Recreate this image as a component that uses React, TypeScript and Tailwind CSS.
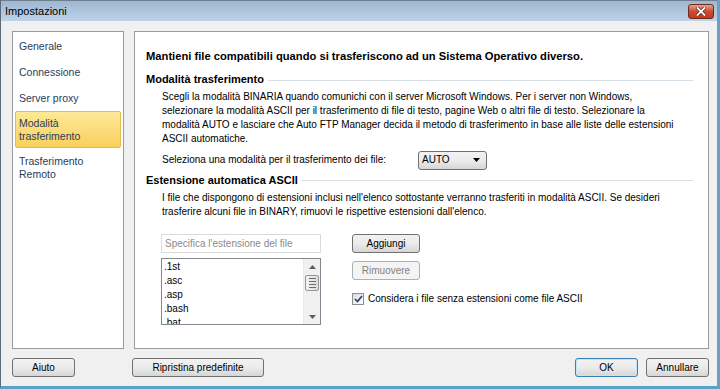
import React from "react";

const font = { fontFamily: '"Liberation Sans", Arial, sans-serif' };

function Btn({ children, className = "", disabled = false, focus = false }: { children: React.ReactNode; className?: string; disabled?: boolean; focus?: boolean }) {
  const base = disabled
    ? "border-[#adb2b5] bg-[#f4f4f4] text-[#838383]"
    : focus
    ? "border-[#3c7fb1] bg-gradient-to-b from-[#f2f2f2] via-[#ebebeb] to-[#d6d6d6] text-black shadow-[inset_0_0_0_1px_#c4e5f6]"
    : "border-[#707070] bg-gradient-to-b from-[#f2f2f2] via-[#ebebeb] to-[#d6d6d6] text-black";
  return (
    <div className={`flex items-center justify-center rounded-[3px] border text-[10px] ${base} ${className}`}>
      {children}
    </div>
  );
}

function SectionTitle({ children }: { children: React.ReactNode }) {
  return (
    <div className="flex items-center gap-[4px] pr-[15px]">
      <span className="whitespace-nowrap text-[11px] font-bold text-black">{children}</span>
      <div className="h-px flex-1 bg-[#d5dfe5] mt-[2px]" />
    </div>
  );
}

export default function App() {
  return (
    <div style={font} className="w-[720px] h-[389px] flex flex-col border-l border-[#5d6b79] border-r-[3px] border-r-[#6b9fc8] border-b-[3px] border-b-[#5aa3c4] bg-[#f0f0f0] overflow-hidden">
      {/* title bar */}
      <div className="h-[21px] flex items-center justify-between bg-gradient-to-b from-[#9fb7d0] to-[#bcd3ea] pl-[4px] pr-[3px] border-t border-[#6f7f90]">
        <span className="text-[11px] text-black">Impostazioni</span>
        <div className="w-[26px] h-[15px] rounded-[3px] border border-[#6e2a1e] bg-gradient-to-b from-[#e0a291] via-[#cc4b2f] to-[#c4391c] flex items-center justify-center">
          <svg width="10" height="9" viewBox="0 0 10 9">
            <path d="M1.5 1 L8.5 8 M8.5 1 L1.5 8" stroke="#5a1c12" strokeWidth="3.2" strokeLinecap="square" />
            <path d="M1.5 1 L8.5 8 M8.5 1 L1.5 8" stroke="#ffffff" strokeWidth="1.8" strokeLinecap="square" />
          </svg>
        </div>
      </div>

      {/* body */}
      <div className="flex flex-1 flex-col pl-[11px] pr-[8px] pt-[10px]">
        <div className="flex h-[318px] gap-[10px]">
          {/* sidebar */}
          <div className="w-[112px] border border-[#9b9b9b] bg-white pt-[1px] px-[2px] text-[10.5px] leading-[13px] text-[#2b3b57]">
            <div className="h-[26px] flex items-center px-[4px]">Generale</div>
            <div className="h-[26px] flex items-center px-[4px]">Connessione</div>
            <div className="h-[26px] flex items-center px-[4px]">Server proxy</div>
            <div className="h-[37px] flex flex-col justify-center px-[3px] rounded-[2px] border border-[#e3bc4c] bg-gradient-to-b from-[#fde998] to-[#f9d05a]">
              <div>Modalità</div>
              <div>trasferimento</div>
            </div>
            <div className="pt-[7px] px-[4px]">
              <div>Trasferimento</div>
              <div>Remoto</div>
            </div>
          </div>

          {/* main panel */}
          <div className="flex-1 border border-[#9b9b9b] bg-white pl-[11px] pt-[17px]">
            <div className="text-[11.2px] font-bold text-black leading-[14px]">
              Mantieni file compatibili quando si trasferiscono ad un Sistema Operativo diverso.
            </div>
            <div className="mt-[8px]">
              <SectionTitle>Modalità trasferimento</SectionTitle>
            </div>
            <div className="pl-[16px] mt-[2px] text-[10px] leading-[14px] text-black">
              <div>Scegli la modalità BINARIA quando comunichi con il server Microsoft Windows. Per i server non Windows,</div>
              <div>selezionare la modalità ASCII per il trasferimento di file di testo, pagine Web o altri file di testo. Selezionare la</div>
              <div>modalità AUTO e lasciare che Auto FTP Manager decida il metodo di trasferimento in base alle liste delle estensioni</div>
              <div>ASCII automatiche.</div>
              <div className="mt-[5px] flex items-center">
                <span className="w-[256px]">Seleziona una modalità per il trasferimento dei file:</span>
                <div className="w-[69px] h-[19px] rounded-[3px] border border-[#707070] bg-gradient-to-b from-[#f2f2f2] via-[#ebebeb] to-[#d6d6d6] flex items-center justify-between pl-[3px] pr-[6px]">
                  <span>AUTO</span>
                  <svg width="7" height="4" viewBox="0 0 7 4"><path d="M0 0 H7 L3.5 4 Z" fill="#000" /></svg>
                </div>
              </div>
            </div>
            <div className="mt-[2px]">
              <SectionTitle>Estensione automatica ASCII</SectionTitle>
            </div>
            <div className="pl-[16px] mt-[3px] text-[10px] leading-[14px] text-black">
              <div>I file che dispongono di estensioni inclusi nell'elenco sottostante verranno trasferiti in modalità ASCII. Se desideri</div>
              <div>trasferire alcuni file in BINARY, rimuovi le rispettive estensioni dall'elenco.</div>
            </div>

            <div className="flex pl-[15px] mt-[15px]">
              <div className="w-[160px] flex flex-col">
                <div className="h-[19px] border border-[#dadada] bg-white flex items-center px-[3px] text-[10px] text-[#8a8a8a]">
                  Specifica l'estensione del file
                </div>
                <div className="mt-[5px] h-[67px] border border-[#828790] bg-white flex overflow-hidden">
                  <div className="flex-1 pl-[2px] text-[10px] leading-[14px] text-black pt-[1px]">
                    <div>.1st</div>
                    <div>.asc</div>
                    <div>.asp</div>
                    <div>.bash</div>
                    <div>.bat</div>
                  </div>
                  <div className="w-[17px] bg-[#f0f0f0] border-l border-[#e8e8e8] flex flex-col items-center">
                    <div className="h-[16px] flex items-center justify-center">
                      <svg width="7" height="4" viewBox="0 0 7 4"><path d="M0 4 H7 L3.5 0 Z" fill="#606060" /></svg>
                    </div>
                    <div className="w-[14px] h-[16px] rounded-[2px] border border-[#979797] bg-gradient-to-r from-[#f2f2f2] to-[#dcdcdc] flex flex-col items-center justify-center gap-[2px]">
                      <div className="w-[7px] h-px bg-[#6d6d6d]" />
                      <div className="w-[7px] h-px bg-[#6d6d6d]" />
                      <div className="w-[7px] h-px bg-[#6d6d6d]" />
                      <div className="w-[7px] h-px bg-[#6d6d6d]" />
                    </div>
                    <div className="flex-1" />
                    <div className="h-[14px] flex items-center justify-center">
                      <svg width="7" height="4" viewBox="0 0 7 4"><path d="M0 0 H7 L3.5 4 Z" fill="#606060" /></svg>
                    </div>
                  </div>
                </div>
              </div>
              <div className="ml-[31px] flex flex-col">
                <Btn className="w-[68px] h-[19px]">Aggiungi</Btn>
                <Btn className="w-[68px] h-[19px] mt-[8px]" disabled>Rimuovere</Btn>
                <div className="mt-[11px] flex items-center gap-[4px]">
                  <div className="w-[12px] h-[12px] border border-[#8f8f8f] bg-gradient-to-br from-[#dcdcdc] to-white flex items-center justify-center">
                    <svg width="9" height="8" viewBox="0 0 9 8"><path d="M1 4 L3.5 6.5 L8 1" stroke="#2a3c8e" strokeWidth="1.7" fill="none" /></svg>
                  </div>
                  <span className="text-[10px] text-black">Considera i file senza estensioni come file ASCII</span>
                </div>
              </div>
            </div>
          </div>
        </div>

        {/* bottom buttons */}
        <div className="flex mt-[9px]">
          <Btn className="w-[63px] h-[19px]">Aiuto</Btn>
          <Btn className="w-[132px] h-[19px] ml-[57px]">Ripristina predefinite</Btn>
          <div className="flex-1" />
          <Btn className="w-[63px] h-[19px]" focus>OK</Btn>
          <Btn className="w-[63px] h-[19px] ml-[8px]">Annullare</Btn>
        </div>
      </div>
    </div>
  );
}
